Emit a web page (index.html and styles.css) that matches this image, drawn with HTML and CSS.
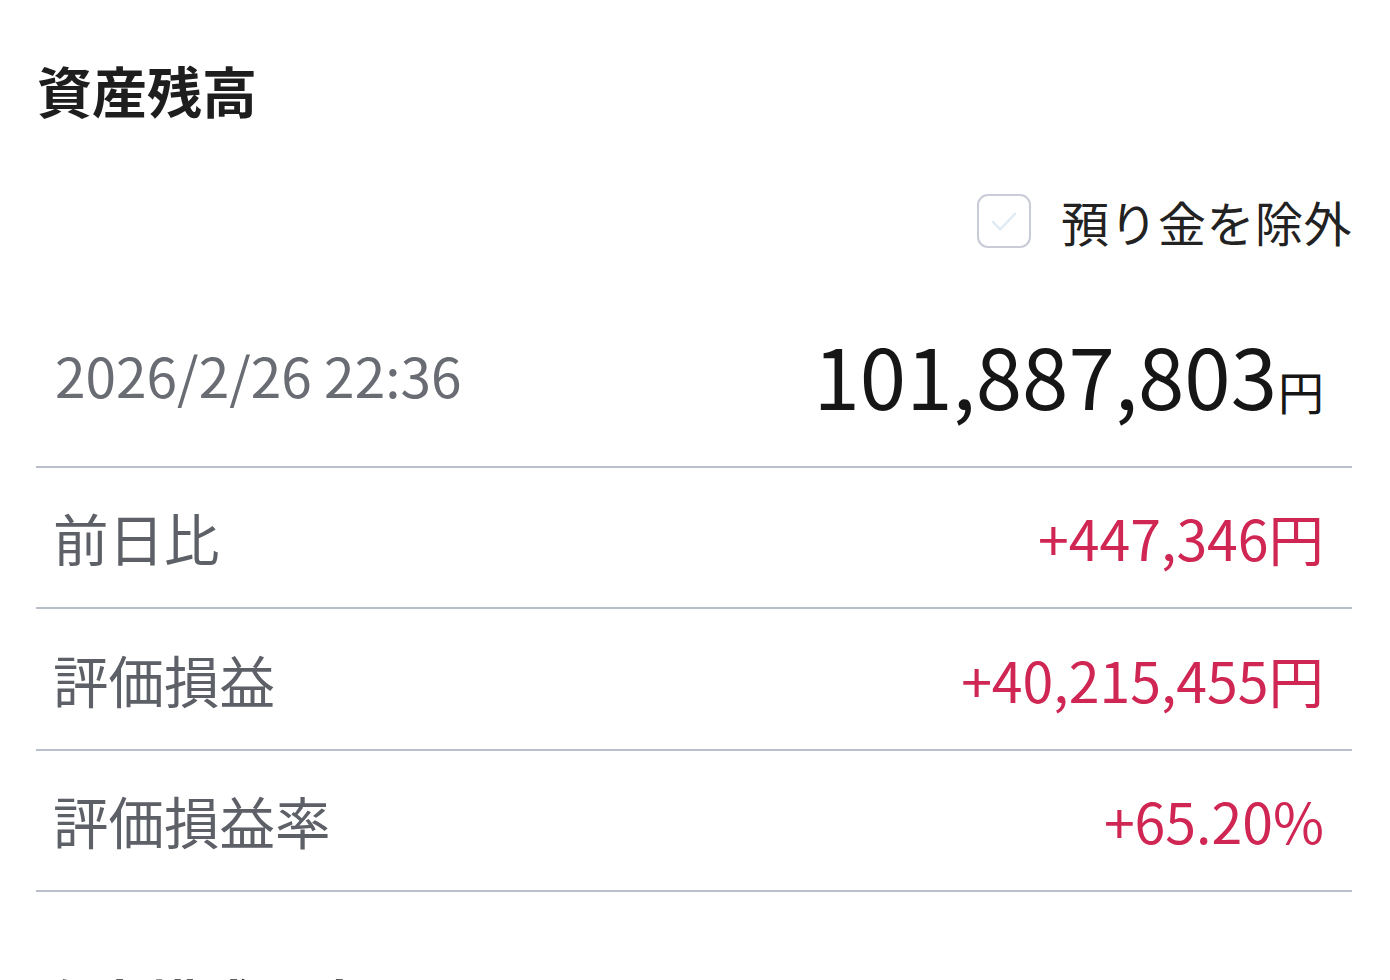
FILE: index.html
```html
<!DOCTYPE html>
<html lang="ja">
<head>
<meta charset="utf-8">
<title>資産残高</title>
<link rel="stylesheet" href="styles.css">
</head>
<body>
<main class="page">
  <h1 class="title">資産残高</h1>
  <div class="filter">
    <label class="check">
      <span class="box">
        <svg viewBox="0 0 54 54" width="54" height="54" aria-hidden="true">
          <path d="M15 28 L23 36 L39 19" fill="none" stroke="#e2eaf5" stroke-width="2.5" stroke-linecap="round" stroke-linejoin="round"/>
        </svg>
      </span>
      <span class="check-label">預り金を除外</span>
    </label>
  </div>
  <div class="total">
    <span class="date">2026/2/26 22:36</span>
    <span class="amount">101,887,803<span class="yen">円</span></span>
  </div>
  <div class="row">
    <span class="label">前日比</span>
    <span class="value">+447,346円</span>
  </div>
  <div class="row">
    <span class="label">評価損益</span>
    <span class="value">+40,215,455円</span>
  </div>
  <div class="row">
    <span class="label">評価損益率</span>
    <span class="value">+65.20%</span>
  </div>
  <h2 class="title next">資産構成比率</h2>
</main>
</body>
</html>
```
FILE: styles.css
```css
* { box-sizing: border-box; }
html, body { margin: 0; padding: 0; background: #ffffff; }
body {
  font-family: "Noto Sans CJK JP", "Noto Sans", sans-serif;
  color: #1d1d1f;
  overflow: hidden;
  height: 980px;
}
.page {
  padding: 0 38px 0 36px;
}
.title {
  margin: 0;
  padding-top: 51px;
  font-size: 55px;
  line-height: 76px;
  font-weight: 700;
  color: #1e1e1e;
  padding-left: 1px;
}
.filter {
  display: flex;
  justify-content: flex-end;
  margin-top: 67px;
}
.check {
  display: flex;
  align-items: center;
  gap: 30px;
}
.box {
  width: 54px;
  height: 54px;
  border: 2px solid #c9ccd6;
  border-radius: 11px;
  display: flex;
  align-items: center;
  justify-content: center;
  background: #fff;
}
.box svg { width: 50px; height: 50px; }
.check-label {
  font-size: 48px;
  line-height: 54px;
  color: #222;
  letter-spacing: 0.5px;
}
.total {
  display: flex;
  justify-content: space-between;
  align-items: center;
  padding: 84px 28px 50px 19px;
  border-bottom: 2px solid #b9bfcb;
}
.date {
  font-size: 55px;
  color: #6a6c74;
}
.amount {
  font-size: 83.5px;
  color: #161616;
  line-height: 1;
}
.yen {
  font-size: 46px;
  margin-left: 1px;
}
.row {
  display: flex;
  justify-content: space-between;
  align-items: center;
  height: 141.5px;
  padding: 0 28px 0 17px;
  border-bottom: 2px solid #b9bfcb;
}
.label {
  font-size: 55.5px;
  color: #5e6068;
}
.value {
  font-size: 55.4px;
  color: #cf2653;
}
.next {
  padding-top: 72px;
}
```
